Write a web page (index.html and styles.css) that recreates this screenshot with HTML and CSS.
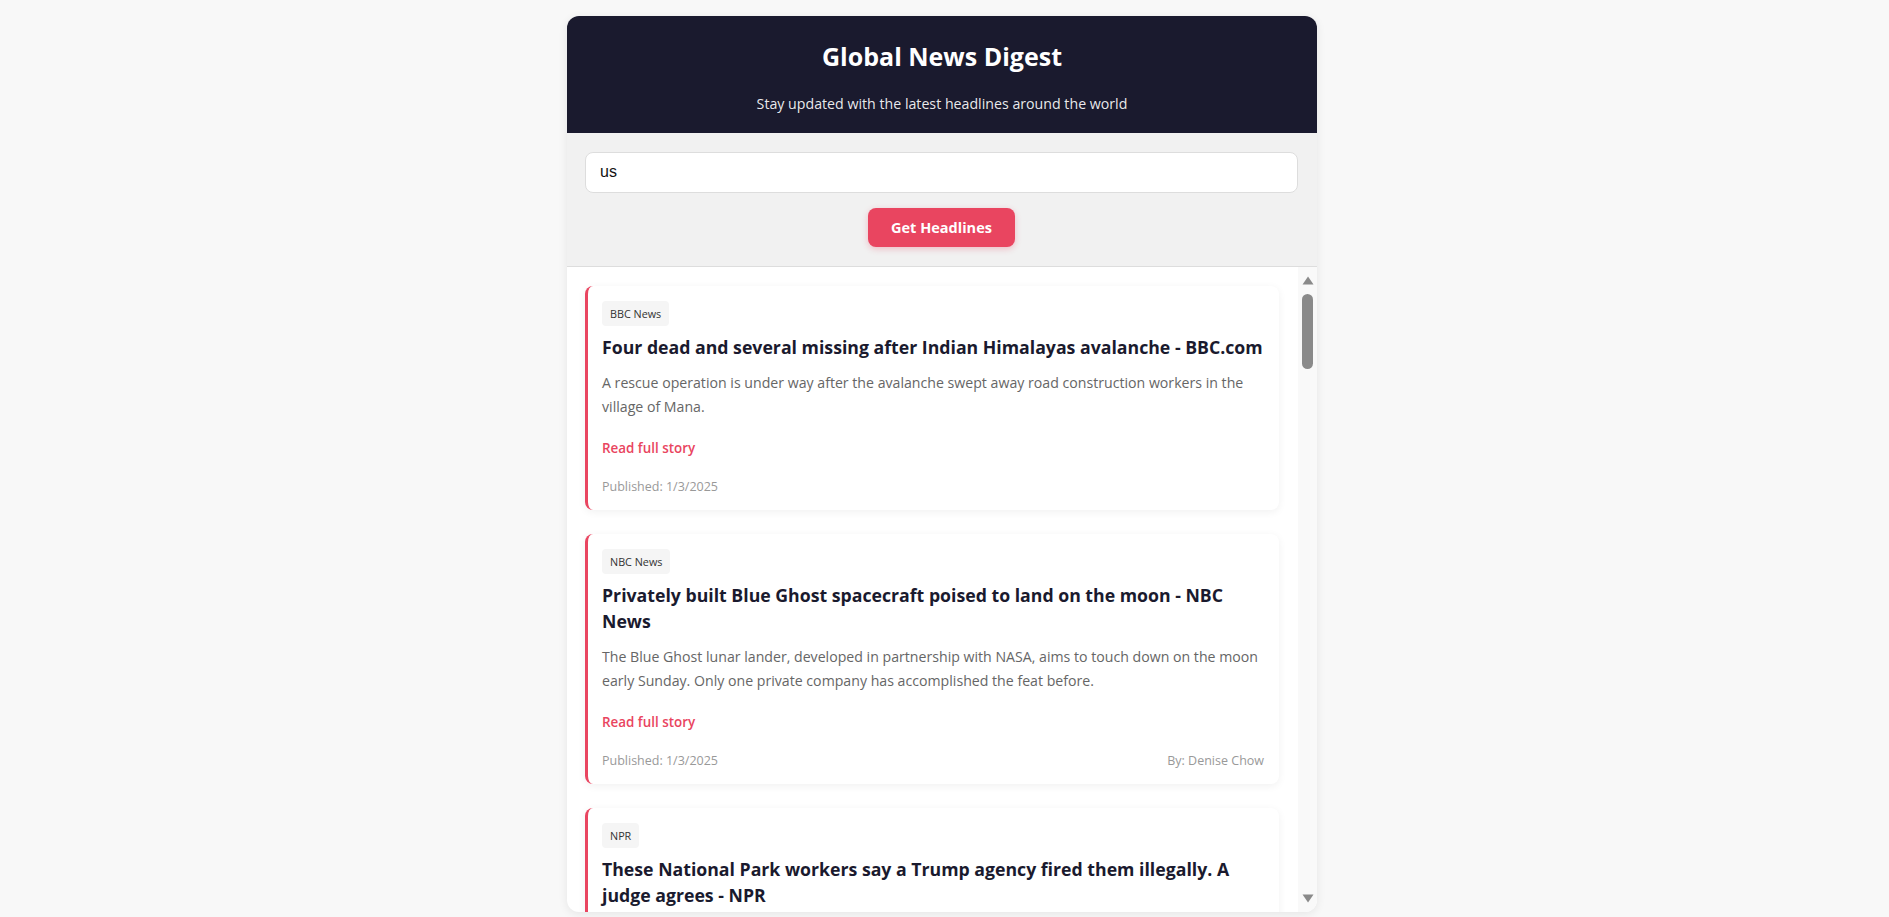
FILE: index.html
```html
<!DOCTYPE html>
<html lang="en">
<head>
<meta charset="utf-8">
<title>Global News Digest</title>
<link rel="stylesheet" href="styles.css">
</head>
<body>
<div class="app">
  <header class="hero">
    <h1 class="hero-title">Global News Digest</h1>
    <p class="hero-sub">Stay updated with the latest headlines around the world</p>
  </header>
  <section class="search">
    <input class="search-input" type="text" value="us">
    <button class="search-btn" type="button">Get Headlines</button>
  </section>
  <div class="feed-wrap">
    <main class="feed">
      <article class="story">
        <span class="tag">BBC News</span>
        <h2 class="story-title">Four dead and several missing after Indian Himalayas avalanche - BBC.com</h2>
        <p class="story-desc">A rescue operation is under way after the avalanche swept away road construction workers in the village of Mana.</p>
        <a class="story-link" href="#">Read full story</a>
        <div class="story-foot"><span>Published: 1/3/2025</span></div>
      </article>
      <article class="story">
        <span class="tag">NBC News</span>
        <h2 class="story-title">Privately built Blue Ghost spacecraft poised to land on the moon - NBC News</h2>
        <p class="story-desc">The Blue Ghost lunar lander, developed in partnership with NASA, aims to touch down on the moon early Sunday. Only one private company has accomplished the feat before.</p>
        <a class="story-link" href="#">Read full story</a>
        <div class="story-foot"><span>Published: 1/3/2025</span><span>By: Denise Chow</span></div>
      </article>
      <article class="story">
        <span class="tag">NPR</span>
        <h2 class="story-title">These National Park workers say a Trump agency fired them illegally. A judge agrees - NPR</h2>
      </article>
    </main>
    <div class="rail">
      <svg class="rail-arrow" width="12" height="9" viewBox="0 0 12 9"><polygon points="6,0.5 11.5,8.5 0.5,8.5" fill="#8a8a8a"/></svg>
      <div class="rail-thumb"></div>
      <div class="rail-space"></div>
      <svg class="rail-arrow" width="12" height="9" viewBox="0 0 12 9"><polygon points="0.5,0.5 11.5,0.5 6,8.5" fill="#8a8a8a"/></svg>
    </div>
  </div>
</div>
</body>
</html>
```

FILE: styles.css
```css
* { box-sizing: border-box; }

html, body { height: 100%; }

body {
  margin: 0;
  padding: 16px 5px 0 0;
  background: #f8f8f8;
  font-family: "Open Sans", "Noto Sans", sans-serif;
  line-height: 1.4;
  color: #1a1a2e;
}

.app {
  width: 750px;
  height: 896px;
  margin: 0 auto;
  background: #ffffff;
  border-radius: 12px;
  overflow: hidden;
  box-shadow: 0 2px 10px rgba(0, 0, 0, 0.08);
  display: flex;
  flex-direction: column;
}

.hero {
  background: #1a1a2e;
  color: #ffffff;
  text-align: center;
  padding: 24px 20px 19px;
}

.hero-title {
  margin: 0 0 19px;
  font-size: 25px;
  font-weight: 700;
  line-height: 33.6px;
}

.hero-sub {
  margin: 0;
  font-size: 14.2px;
  line-height: 21px;
  color: rgba(255, 255, 255, 0.92);
}

.search {
  background: #f1f1f1;
  padding: 19px 19px 19px 18px;
  border-bottom: 1px solid #dddddd;
  display: flex;
  flex-direction: column;
  align-items: center;
  gap: 15px;
}

.search-input {
  width: 100%;
  height: 41px;
  padding: 0 14px;
  border: 1px solid #dddddd;
  border-radius: 8px;
  background: #ffffff;
  font-family: "Liberation Sans", Arial, sans-serif;
  font-size: 16px;
  color: #111111;
  outline: none;
}

.search-btn {
  width: 147px;
  height: 39px;
  border: none;
  border-radius: 8px;
  background: #e94560;
  color: #ffffff;
  font-family: "Open Sans", "Noto Sans", sans-serif;
  font-size: 14.5px;
  font-weight: 700;
  box-shadow: 0 2px 6px rgba(233, 69, 96, 0.3);
  cursor: pointer;
}

.feed-wrap {
  flex: 1;
  min-height: 0;
  display: flex;
}

.feed {
  flex: 1;
  min-width: 0;
  overflow: hidden;
  padding: 19px 19px 0 18px;
  display: flex;
  flex-direction: column;
  gap: 24px;
}

.story {
  flex-shrink: 0;
  background: #ffffff;
  border-left: 3px solid #e94560;
  border-radius: 8px;
  padding: 15px 15px 15px 14px;
  box-shadow: 0 2px 8px rgba(0, 0, 0, 0.06);
  display: flex;
  flex-direction: column;
  align-items: flex-start;
}

.tag {
  display: inline-block;
  background: #f5f5f5;
  color: #333333;
  font-size: 10.8px;
  line-height: 17px;
  padding: 4px 8px;
  border-radius: 4px;
}

.story-title {
  margin: 9px 0 11px;
  font-size: 17.7px;
  font-weight: 700;
  line-height: 25.5px;
  color: #1a1a2e;
}

.story-desc {
  margin: 0;
  font-size: 14.15px;
  line-height: 24px;
  color: #666666;
}

.story-link {
  margin-top: 17px;
  font-size: 13.4px;
  font-weight: 600;
  line-height: 24px;
  color: #e94560;
  text-decoration: none;
}

.story-foot {
  align-self: stretch;
  margin-top: 19px;
  display: flex;
  justify-content: space-between;
  font-size: 12.5px;
  line-height: 16px;
  color: #999999;
}

.rail {
  width: 19px;
  flex-shrink: 0;
  background: #f9f9f9;
  display: flex;
  flex-direction: column;
  align-items: center;
  padding: 9px 0 9px;
}

.rail-arrow { display: block; }

.rail-thumb {
  margin-top: 9px;
  width: 11px;
  height: 75px;
  border-radius: 6px;
  background: #8a8a8a;
}

.rail-space { flex: 1; }
```
